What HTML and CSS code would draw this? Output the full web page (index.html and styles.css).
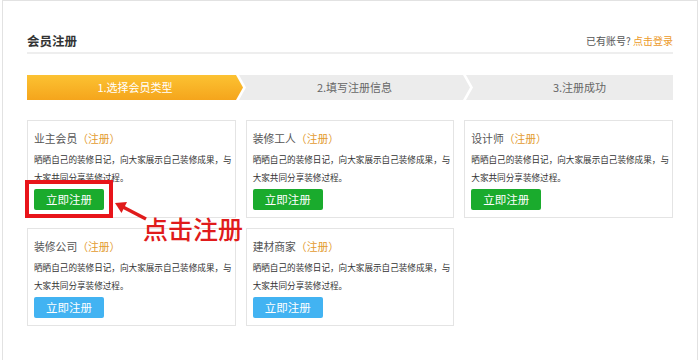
FILE: index.html
```html
<!DOCTYPE html>
<html lang="zh-CN">
<head>
    <meta charset="UTF-8">
    <meta name="viewport" content="width=device-width, initial-scale=1.0">
    <title>会员注册</title>
    <link rel="stylesheet" href="styles.css">
</head>
<body>
    <div class="page">
        <div class="head">
            <h2 class="head-title">会员注册</h2>
            <div class="head-login">已有账号? <a href="#">点击登录</a></div>
        </div>

        <div class="steps">
            <div class="step step-first step-active">1.选择会员类型</div>
            <div class="step step-mid">2.填写注册信息</div>
            <div class="step step-last">3.注册成功</div>
        </div>

        <div class="types">
            <div class="type-card">
                <div class="type-title">业主会员<span class="type-reg">（注册）</span></div>
                <p class="type-desc">晒晒自己的装修日记，向大家展示自己装修成果，与大家共同分享装修过程。</p>
                <a href="#" class="btn btn-green">立即注册</a>
            </div>
            <div class="type-card">
                <div class="type-title">装修工人<span class="type-reg">（注册）</span></div>
                <p class="type-desc">晒晒自己的装修日记，向大家展示自己装修成果，与大家共同分享装修过程。</p>
                <a href="#" class="btn btn-green">立即注册</a>
            </div>
            <div class="type-card">
                <div class="type-title">设计师<span class="type-reg">（注册）</span></div>
                <p class="type-desc">晒晒自己的装修日记，向大家展示自己装修成果，与大家共同分享装修过程。</p>
                <a href="#" class="btn btn-green">立即注册</a>
            </div>
            <div class="type-card">
                <div class="type-title">装修公司<span class="type-reg">（注册）</span></div>
                <p class="type-desc">晒晒自己的装修日记，向大家展示自己装修成果，与大家共同分享装修过程。</p>
                <a href="#" class="btn btn-blue">立即注册</a>
            </div>
            <div class="type-card">
                <div class="type-title">建材商家<span class="type-reg">（注册）</span></div>
                <p class="type-desc">晒晒自己的装修日记，向大家展示自己装修成果，与大家共同分享装修过程。</p>
                <a href="#" class="btn btn-blue">立即注册</a>
            </div>

            <!-- annotation over the first card -->
            <span class="mark-box"></span>
            <svg class="mark-arrow" width="34" height="20" viewBox="0 0 34 20">
                <line x1="7" y1="5.5" x2="31" y2="18" stroke="#e01b1b" stroke-width="3.5"/>
                <polygon points="0,2 12,1 6.5,12" fill="#e01b1b"/>
            </svg>
            <span class="mark-text">点击注册</span>
        </div>
    </div>
</body>
</html>
```

FILE: styles.css
```css
body {
    margin: 0;
    font-family: "Noto Sans CJK SC", "Liberation Sans", sans-serif;
    background: #fff;
    color: #333;
}
.page {
    margin: 0 2px;
    min-height: 360px;
    box-sizing: border-box;
    padding: 0 24px;
    border: 1px solid #e2e2e2;
    border-bottom: none;
}
.head {
    display: flex;
    justify-content: space-between;
    align-items: center;
    padding-top: 27px;
    height: 24px;
    border-bottom: 2px solid #eee;
}
.head-title {
    margin: 0;
    font-size: 12.5px;
    font-weight: bold;
    color: #333;
}
.head-login {
    font-size: 10px;
    color: #555;
}
.head-login a {
    color: #ec9a2a;
    text-decoration: none;
}
.steps {
    display: flex;
    margin-top: 21px;
    height: 25px;
}
.step {
    height: 25px;
    line-height: 25px;
    font-size: 11px;
    text-align: center;
    background: #ececec;
    color: #666;
}
.step-first {
    width: 216px;
    clip-path: polygon(0 0, calc(100% - 7px) 0, 100% 50%, calc(100% - 7px) 100%, 0 100%);
}
.step-mid {
    width: 231px;
    margin-left: -4px;
    clip-path: polygon(0 0, calc(100% - 7px) 0, 100% 50%, calc(100% - 7px) 100%, 0 100%, 7px 50%);
}
.step-last {
    flex: 1;
    margin-left: -4px;
    padding-left: 20px;
    clip-path: polygon(0 0, 100% 0, 100% 100%, 0 100%, 7px 50%);
}
.step-active {
    background: linear-gradient(#fcc232, #f5a51c);
    color: #fff;
}
.types {
    position: relative;
    display: grid;
    grid-template-columns: repeat(3, 1fr);
    gap: 10px;
    margin-top: 20px;
}
.type-card {
    border: 1px solid #e4e4e4;
    padding: 7px 3px 7px 6px;
}
.type-title {
    font-size: 10.8px;
    line-height: 20px;
    color: #555;
}
.type-reg {
    color: #e39b2f;
}
.type-desc {
    margin: 2px 0 0;
    font-size: 8.6px;
    line-height: 18px;
    color: #333;
}
.btn {
    display: block;
    width: 70px;
    height: 21px;
    margin-top: 3px;
    line-height: 21px;
    text-align: center;
    font-size: 11.5px;
    color: #fff;
    text-decoration: none;
    border-radius: 2px;
}
.btn-green {
    background: #1aab2d;
}
.btn-blue {
    background: #42b3f2;
}
.mark-box {
    position: absolute;
    left: -2px;
    top: 60px;
    width: 80px;
    height: 30px;
    border: 4px solid #e8141a;
}
.mark-arrow {
    position: absolute;
    left: 88px;
    top: 81px;
}
.mark-text {
    position: absolute;
    left: 116px;
    top: 96px;
    font-size: 25px;
    line-height: 25px;
    font-weight: 500;
    color: #e01b1b;
    white-space: nowrap;
}
```
